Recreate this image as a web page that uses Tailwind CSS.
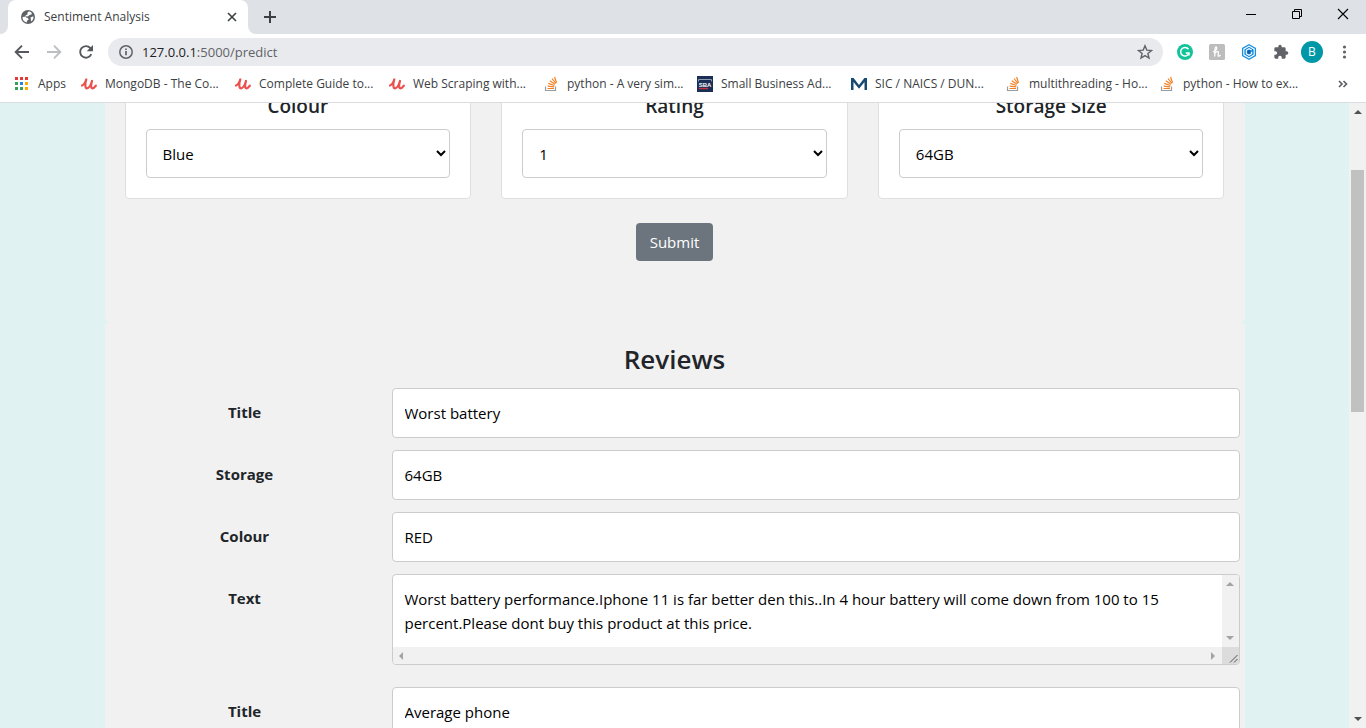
<!DOCTYPE html>
<html lang="en">
<head>
<meta charset="utf-8">
<meta name="viewport" content="width=device-width, initial-scale=1">
<title>Sentiment Analysis</title>
<script src="https://cdn.jsdelivr.net/npm/@tailwindcss/browser@4"></script>
</head>
<body class="flex h-screen flex-col overflow-hidden bg-white font-['Segoe_UI','Open_Sans',sans-serif] text-[15px] text-[#212529]">
<svg class="hidden" aria-hidden="true">
  <symbol id="udemy" viewBox="0 0 16 16"><path d="M1 9.500C2.800 8.800 4.300 6.500 5.300 3.500 4.200 7 3.600 12.300 6 12.300c2.300 0 4-4 5-7.300-.9 3.200-1.500 7.300.4 7.300 1.300 0 2.300-1.200 3.400-2.600" fill="none" stroke="#eb524f" stroke-width="2.200" stroke-linecap="round" stroke-linejoin="round"/></symbol>
  <symbol id="stack" viewBox="0 0 16 16"><path d="M2.500 10.500v4h10v-4" fill="none" stroke="#9a9c9f" stroke-width="1.200"/><path d="M4.500 12.500h6.500M4.700 10.100l6.500.8M5.300 7.400l6.100 2.100M6.800 4.700l5.200 3.600M9 2.500l3.900 5M11.600 1l1.900 5.800" fill="none" stroke="#f48024" stroke-width="1.200"/></symbol>
</svg>

<header class="shrink-0 border-b border-[#dadce0] text-[12px] text-[#3c4043]">
  <div class="flex h-[34px] bg-[#dee1e6]">
    <div class="w-2 bg-white"><div class="h-full rounded-br-lg bg-[#dee1e6]"></div></div>
    <div class="flex w-60 items-center rounded-t-lg bg-white pr-2 pl-3">
      <svg class="size-4" viewBox="0 0 16 16"><circle cx="8" cy="8" r="7" fill="#5f6368"/><path d="M9 2.300 7.300 3.800l.4 1.500-2.200 1.200v1.300H3.800L2.500 8.200a5.600 5.600 0 0 0 4.300 5.300l.2-1.800 1.700-1.300-.8-1.500-2.200-.6.300-1 1.800.2L9.500 6l2-.6.3-1.400A5.600 5.600 0 0 0 9 2.300zM10.500 8.500l2.900-1.200a5.500 5.500 0 0 1-2.300 5.300l-.2-2.100z" fill="#fff"/></svg>
      <span class="ml-2 flex-1">Sentiment Analysis</span>
      <button aria-label="Close tab" class="grid size-4 place-items-center"><svg class="size-3" viewBox="0 0 12 12"><path d="m2 2 8 8M10 2l-8 8" stroke="#3c4043" stroke-width="1.600"/></svg></button>
    </div>
    <div class="w-2 bg-white"><div class="h-full rounded-bl-lg bg-[#dee1e6]"></div></div>
    <button aria-label="New tab" class="ml-1 grid w-5 place-items-center"><svg class="size-3.5" viewBox="0 0 14 14"><path d="M7 1v12M1 7h12" stroke="#3c4043" stroke-width="2"/></svg></button>
    <div class="ml-auto flex h-7 text-black">
      <button aria-label="Minimize" class="grid w-[46px] place-items-center"><svg class="size-3" viewBox="0 0 12 12"><path d="M1 6.500h10" stroke="currentColor"/></svg></button>
      <button aria-label="Restore" class="grid w-[46px] place-items-center"><svg class="size-3" viewBox="0 0 12 12"><path d="M1.500 3.500h7v7h-7zM3.500 3.500v-2h7v7h-2" fill="none" stroke="currentColor"/></svg></button>
      <button aria-label="Close" class="grid w-[46px] place-items-center"><svg class="size-3" viewBox="0 0 12 12"><path d="m1 1 10 10M11 1 1 11" stroke="currentColor" stroke-width="1.100"/></svg></button>
    </div>
  </div>
  <div class="flex h-9 items-center pr-[11px] pl-3.5">
    <button aria-label="Back"><svg class="size-4" viewBox="0 0 16 16"><path d="M15 8H2M8 1.700 1.700 8 8 14.300" fill="none" stroke="#55595e" stroke-width="1.900"/></svg></button>
    <button aria-label="Forward" class="ml-4"><svg class="size-4" viewBox="0 0 16 16"><path d="M1 8h13M8 1.700 14.300 8 8 14.300" fill="none" stroke="#bcbec1" stroke-width="1.900"/></svg></button>
    <button aria-label="Reload" class="ml-4"><svg class="size-4" viewBox="0 0 16 16"><path d="M13.300 10.200A5.800 5.800 0 1 1 12.300 4L14 5.800" fill="none" stroke="#55595e" stroke-width="1.900"/><path d="M15 1v6.300H8.700z" fill="#55595e"/></svg></button>
    <div class="ml-3.5 flex h-7 flex-1 items-center rounded-full bg-[#e9eaed] pr-2.5 pl-2.5">
      <svg class="size-4" viewBox="0 0 16 16"><circle cx="8" cy="8" r="6.200" fill="none" stroke="#5f6368" stroke-width="1.500"/><path d="M8 7v4.300M8 4.500v1.600" stroke="#5f6368" stroke-width="1.700"/></svg>
      <span class="ml-2 pt-0.5 text-[13px] text-[#5f6368]"><span class="text-[#202124]">127.0.0.1</span>:5000/predict</span>
      <button aria-label="Bookmark" class="ml-auto"><svg class="size-4" viewBox="0 0 16 16"><path d="m8 1.800 1.800 4.300 4.700.4-3.600 3 1.100 4.600L8 11.600l-4 2.500 1.100-4.600-3.600-3 4.700-.4z" fill="none" stroke="#5f6368" stroke-width="1.400"/></svg></button>
    </div>
    <div class="ml-3.5 flex items-center gap-4">
      <button aria-label="Grammarly"><svg class="size-4" viewBox="0 0 16 16"><circle cx="8" cy="8" r="8" fill="#15c39a"/><path d="M11.500 5.300A4.300 4.300 0 1 0 12 9.300M8.800 9h3.200v2.600" fill="none" stroke="#fff" stroke-width="1.500"/></svg></button>
      <button aria-label="Honey"><svg class="size-4" viewBox="0 0 16 16"><rect width="16" height="16" rx="1.500" fill="#bdbdbd"/><path d="M4 8c2.500-1 4-3 3.600-4.500C7 2 5.800 4 5.800 7v5.500M5.800 9.500C7 7.200 9.700 6.700 9.400 9c-.2 1.600-.7 3.500.5 3.200.7-.2 1.200-.8 1.600-1.400" fill="none" stroke="#fff" stroke-width="1.300"/></svg></button>
      <button aria-label="Extension"><svg class="size-4" viewBox="0 0 16 16"><path d="m8 .8 6.400 3.600v7.200L8 15.200l-6.400-3.600V4.400z" fill="#fff" stroke="#1a8fe0" stroke-width="1.300"/><path d="m8 2.800 4.600 2.600v5.200L8 13.200l-4.600-2.600V5.400z" fill="#0d86d8"/><path d="M10.700 6 8 4.700 5.300 6.200v3.600L8 11.300l2.700-1.500V8.200H8.500" fill="none" stroke="#fff" stroke-width="1.100"/><path d="m8 6 1.700 1v2L8 10 6.300 9V7z" fill="#0a5fae"/></svg></button>
      <button aria-label="Extensions"><svg class="size-4" viewBox="0 0 24 24"><path d="M20.500 11H19V7a2 2 0 0 0-2-2h-4V3.500a2.500 2.500 0 0 0-5 0V5H4a2 2 0 0 0-2 2v3.800h1.500a2.700 2.700 0 0 1 0 5.400H2V20c0 1.100.9 2 2 2h3.800v-1.500a2.700 2.700 0 0 1 5.400 0V22H17a2 2 0 0 0 2-2v-4h1.500a2.500 2.500 0 0 0 0-5z" fill="#5f6368"/></svg></button>
    </div>
    <button aria-label="Profile" class="ml-3 size-[22px] rounded-full bg-[#0097a7] text-[12px] text-white">B</button>
    <button aria-label="Menu" class="ml-3"><svg class="h-4 w-5" viewBox="0 0 20 16"><g fill="#5f6368"><circle cx="9.500" cy="3" r="1.600"/><circle cx="9.500" cy="8" r="1.600"/><circle cx="9.500" cy="13" r="1.600"/></g></svg></button>
  </div>
  <nav class="flex h-8 items-center overflow-hidden pb-1 pl-3.5 text-[12px] whitespace-nowrap">
    <a href="#" class="flex w-[67px] shrink-0 items-center gap-2"><svg class="size-4" viewBox="0 0 16 16"><path d="M1 1h3v3H1zM6 1h3v3H6zM11 1h3v3h-3z" fill="#e53935"/><path d="M1 6h3v3H1zM1 11h3v3H1zM6 11h3v3H6z" fill="#34a05a"/><path d="M6 6h3v3H6z" fill="#1e88e5"/><path d="M11 6h3v3h-3zM11 11h3v3h-3z" fill="#f9ab00"/></svg>Apps</a>
    <a href="#" class="flex w-[154px] shrink-0 items-center gap-2"><svg class="size-4"><use href="#udemy"/></svg>MongoDB - The Co...</a>
    <a href="#" class="flex w-[154px] shrink-0 items-center gap-2"><svg class="size-4"><use href="#udemy"/></svg>Complete Guide to...</a>
    <a href="#" class="flex w-[154px] shrink-0 items-center gap-2"><svg class="size-4"><use href="#udemy"/></svg>Web Scraping with...</a>
    <a href="#" class="flex w-[154px] shrink-0 items-center gap-2"><svg class="size-4"><use href="#stack"/></svg>python - A very sim...</a>
    <a href="#" class="flex w-[154px] shrink-0 items-center gap-2"><svg class="size-4" viewBox="0 0 16 16"><rect width="16" height="16" fill="#1b2e55"/><path d="M1.500 5.500V3.500h13v2" fill="none" stroke="#8f9bb5"/><path d="M2 12.500h9" stroke="#c8313f" stroke-width="1.400"/><text x="8" y="10.500" text-anchor="middle" font-size="6" font-weight="700" fill="#fff" font-family="Liberation Sans">SBA</text></svg>Small Business Ad...</a>
    <a href="#" class="flex w-[154px] shrink-0 items-center gap-2"><svg class="size-4" viewBox="0 0 16 16"><path d="M0 14V2h2.600L8 9l5.400-7H16v12h-2.500V6L8 12.700 2.500 6v8z" fill="#174a73"/></svg>SIC / NAICS / DUN...</a>
    <a href="#" class="flex w-[154px] shrink-0 items-center gap-2"><svg class="size-4"><use href="#stack"/></svg>multithreading - Ho...</a>
    <a href="#" class="flex w-[154px] shrink-0 items-center gap-2"><svg class="size-4"><use href="#stack"/></svg>python - How to ex...</a>
    <button aria-label="More bookmarks" class="mr-[17px] ml-auto"><svg class="h-3 w-3" viewBox="0 0 12 12"><path d="m2 3 3 3-3 3M6.500 3l3 3-3 3" fill="none" stroke="#5f6368" stroke-width="1.700"/></svg></button>
  </nav>
</header>

<div class="flex min-h-0 flex-1">
  <main class="min-w-0 flex-1 overflow-hidden bg-[#e0f2f1]">
    <form class="mx-auto -mt-[30px] max-w-[1140px] rounded-[5px] bg-[#f1f1f1] px-5 pb-[61px]">
      <div class="grid grid-cols-3 gap-[30px]">
        <div class="rounded-b border border-[#dfdfdf] bg-white p-5">
          <label for="colour" class="mb-[11px] block text-center text-[19px] leading-6 font-semibold">Colour</label>
          <select id="colour" class="h-[49px] w-full rounded border border-[#ccc] bg-white px-3 text-black"><option>Blue</option></select>
        </div>
        <div class="rounded-b border border-[#dfdfdf] bg-white p-5">
          <label for="rating" class="mb-[11px] block text-center text-[19px] leading-6 font-semibold">Rating</label>
          <select id="rating" class="h-[49px] w-full rounded border border-[#ccc] bg-white px-3 text-black"><option>1</option></select>
        </div>
        <div class="rounded-b border border-[#dfdfdf] bg-white p-5">
          <label for="size" class="mb-[11px] block text-center text-[19px] leading-6 font-semibold">Storage Size</label>
          <select id="size" class="h-[49px] w-full rounded border border-[#ccc] bg-white px-3 text-black"><option>64GB</option></select>
        </div>
      </div>
      <button type="button" class="mx-auto mt-6 block h-[38px] rounded bg-[#6c757d] px-3.5 text-white">Submit</button>
    </form>

    <section class="mx-auto max-w-[1140px] rounded-[5px] bg-[#f1f1f1] px-[5px] pt-5">
      <h2 class="mb-3 text-center text-[26px] leading-[34px] font-semibold">Reviews</h2>
      <div class="grid grid-cols-[270fr_848fr] gap-3">
        <label for="t1" class="pt-3 text-center leading-6 font-bold">Title</label>
        <input id="t1" value="Worst battery" class="h-[50px] w-full rounded border border-[#ccc] bg-white px-3 text-black">
        <label for="s1" class="pt-3 text-center leading-6 font-bold">Storage</label>
        <input id="s1" value="64GB" class="h-[50px] w-full rounded border border-[#ccc] bg-white px-3 text-black">
        <label for="c1" class="pt-3 text-center leading-6 font-bold">Colour</label>
        <input id="c1" value="RED" class="h-[50px] w-full rounded border border-[#ccc] bg-white px-3 text-black">
        <label for="x1" class="pt-3 text-center leading-6 font-bold">Text</label>
        <div class="mb-2.5 grid h-[91px] grid-cols-[1fr_17px] grid-rows-[1fr_17px] overflow-hidden rounded border border-[#ccc] bg-white">
          <textarea id="x1" class="resize-none overflow-hidden px-3 pt-3 leading-6 text-black">Worst battery performance.Iphone 11 is far better den this..In 4 hour battery will come down from 100 to 15 percent.Please dont buy this product at this price.</textarea>
          <div class="flex flex-col items-center justify-between bg-[#f1f1f1] py-1.5">
            <svg class="h-1.5 w-2" viewBox="0 0 8 6"><path d="m4 1 4 4H0z" fill="#a3a3a3"/></svg>
            <svg class="h-1.5 w-2" viewBox="0 0 8 6"><path d="m4 5 4-4H0z" fill="#a3a3a3"/></svg>
          </div>
          <div class="flex items-center justify-between bg-[#f1f1f1] px-1.5">
            <svg class="h-2 w-1.5" viewBox="0 0 6 8"><path d="m0 4 4-4v8z" fill="#a3a3a3"/></svg>
            <svg class="h-2 w-1.5" viewBox="0 0 6 8"><path d="M5 4 1 0v8z" fill="#a3a3a3"/></svg>
          </div>
          <div class="bg-[#dcdcdc]"><svg class="size-[17px]" viewBox="0 0 17 17"><path d="m8 15.500 7.500-7.500M12 15.500l3.500-3.500" stroke="#555"/></svg></div>
        </div>
        <label for="t2" class="pt-3 text-center leading-6 font-bold">Title</label>
        <input id="t2" value="Average phone" class="h-[50px] w-full rounded border border-[#ccc] bg-white px-3 text-black">
      </div>
    </section>
  </main>
  <div class="flex w-[17px] flex-col items-center bg-[#f1f1f1] py-1.5">
    <svg class="h-1.5 w-2" viewBox="0 0 8 6"><path d="m4 1 4 4H0z" fill="#505050"/></svg>
    <div class="mt-[55px] h-[242px] w-[13px] bg-[#c1c1c1]"></div>
    <svg class="mt-auto h-1.5 w-2" viewBox="0 0 8 6"><path d="m4 5 4-4H0z" fill="#505050"/></svg>
  </div>
</div>
</body>
</html>
